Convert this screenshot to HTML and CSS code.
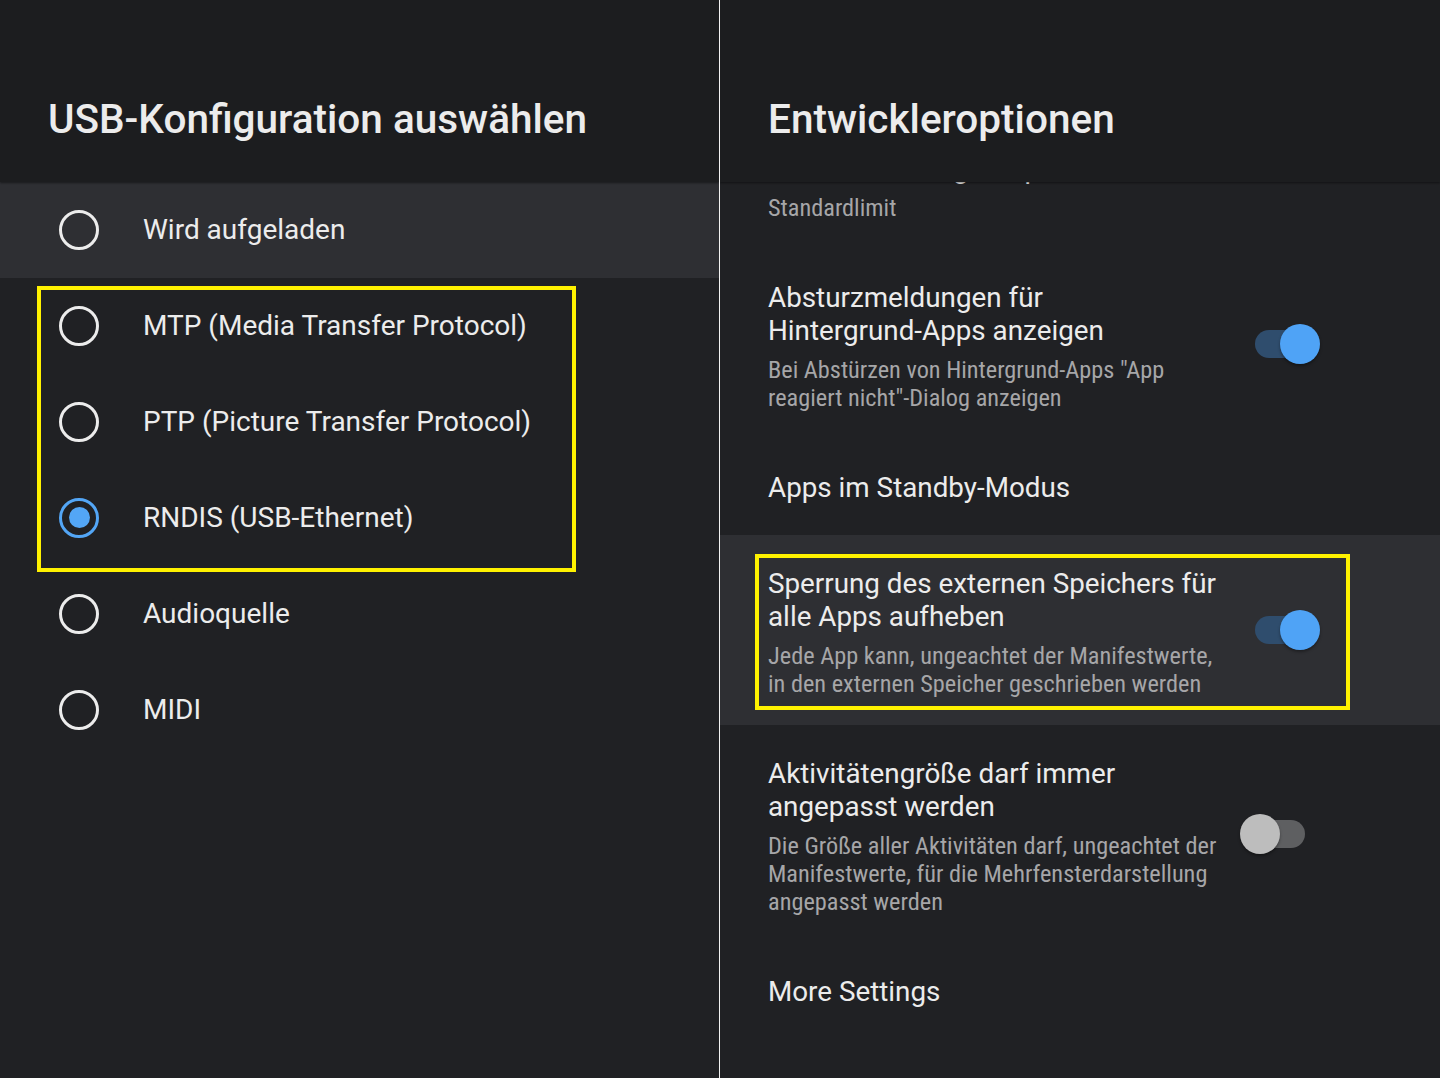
FILE: index.html
```html
<!DOCTYPE html>
<html lang="de">
<head>
<meta charset="utf-8">
<title>USB-Konfiguration / Entwickleroptionen</title>
<link rel="stylesheet" href="styles.css">
</head>
<body>
<div class="screen">
  <section class="panel panel-left">
    <header class="panel-header"><h1 class="panel-title">USB-Konfiguration auswählen</h1></header>
    <div class="radio-list">
      <div class="radio-row is-focused"><span class="radio"></span><span class="radio-label">Wird aufgeladen</span></div>
      <div class="radio-row"><span class="radio"></span><span class="radio-label">MTP (Media Transfer Protocol)</span></div>
      <div class="radio-row"><span class="radio"></span><span class="radio-label">PTP (Picture Transfer Protocol)</span></div>
      <div class="radio-row"><span class="radio is-checked"></span><span class="radio-label">RNDIS (USB-Ethernet)</span></div>
      <div class="radio-row"><span class="radio"></span><span class="radio-label">Audioquelle</span></div>
      <div class="radio-row"><span class="radio"></span><span class="radio-label">MIDI</span></div>
    </div>
    <div class="mark mark-left"></div>
  </section>
  <div class="divider"></div>
  <section class="panel panel-right">
    <header class="panel-header"><h1 class="panel-title">Entwickleroptionen</h1></header>
    <div class="pref-list">
      <div class="pref pref-cut">
        <div class="pref-text">
          <div class="pref-title">Limit für Hintergrundprozesse</div>
          <div class="pref-summary">Standardlimit</div>
        </div>
      </div>
      <div class="pref">
        <div class="pref-text">
          <div class="pref-title">Absturzmeldungen für <span class="nowrap">Hintergrund-Apps</span> anzeigen</div>
          <div class="pref-summary">Bei Abstürzen von Hintergrund-Apps "App reagiert nicht"-Dialog anzeigen</div>
        </div>
        <span class="switch is-on"><span class="switch-track"></span><span class="switch-thumb"></span></span>
      </div>
      <div class="pref">
        <div class="pref-text">
          <div class="pref-title">Apps im Standby-Modus</div>
        </div>
      </div>
      <div class="pref is-focused">
        <div class="pref-text">
          <div class="pref-title">Sperrung des externen Speichers für alle Apps aufheben</div>
          <div class="pref-summary">Jede App kann, ungeachtet der Manifestwerte, in den externen Speicher geschrieben werden</div>
        </div>
        <span class="switch is-on"><span class="switch-track"></span><span class="switch-thumb"></span></span>
      </div>
      <div class="pref">
        <div class="pref-text">
          <div class="pref-title">Aktivitätengröße darf immer angepasst werden</div>
          <div class="pref-summary">Die Größe aller Aktivitäten darf, ungeachtet der Manifestwerte, für die Mehrfensterdarstellung angepasst werden</div>
        </div>
        <span class="switch"><span class="switch-track"></span><span class="switch-thumb"></span></span>
      </div>
      <div class="pref">
        <div class="pref-text">
          <div class="pref-title">More Settings</div>
        </div>
      </div>
    </div>
    <div class="mark mark-right"></div>
  </section>
</div>
</body>
</html>
```
FILE: styles.css
```css
* { box-sizing: border-box; }
html, body { margin: 0; padding: 0; }
body {
  background: #202124;
  font-family: Roboto, "Noto Sans", "Liberation Sans", sans-serif;
  color: #ececec;
  width: 1440px;
  height: 1078px;
  overflow: hidden;
}
.screen {
  display: grid;
  grid-template-columns: 719px 1px 720px;
  height: 1078px;
}
.divider { background: #f2f2f2; }
.nowrap { white-space: nowrap; }
.panel {
  position: relative;
  display: flex;
  flex-direction: column;
  background: #202124;
  overflow: hidden;
}
.panel-header {
  position: relative;
  z-index: 2;
  height: 182px;
  flex: 0 0 182px;
  background: #1c1d1f;
  padding: 95px 0 0 48px;
  box-shadow: 0 1px 2px rgba(0,0,0,0.45);
}
.panel-title {
  margin: 0;
  font-size: 40.5px;
  line-height: 48px;
  font-weight: 500;
  color: #ececec;
  letter-spacing: 0;
}

/* left list */
.radio-list { display: flex; flex-direction: column; }
.radio-row {
  display: flex;
  align-items: center;
  height: 96px;
  padding-left: 59px;
}
.radio-row.is-focused { background: #2e2f33; }
.radio {
  width: 40px;
  height: 40px;
  flex: 0 0 40px;
  border-radius: 50%;
  border: 3.5px solid #ececec;
  margin-right: 44px;
  margin-bottom: 1px;
  display: grid;
  place-items: center;
}
.radio.is-checked { border-color: #53a6f6; }
.radio.is-checked::after {
  content: "";
  width: 21px;
  height: 21px;
  border-radius: 50%;
  background: #53a6f6;
}
.radio-label {
  font-size: 28px;
  line-height: 33px;
  margin-bottom: 2px;
  color: #ececec;
}

/* right list */
.pref-list {
  display: flex;
  flex-direction: column;
  overflow: hidden;
  flex: 1;
}
.pref {
  display: flex;
  align-items: center;
  min-height: 96px;
  padding: 0 120px 0 48px;
}
.pref.is-focused { background: #2e2f33; }
.pref-cut { margin-top: -62px; }
.pref-text {
  flex: 1;
  align-self: flex-start;
  padding: 31.5px 0 27px;
}
.pref-title {
  font-size: 27.8px;
  line-height: 33px;
  color: #ececec;
}
.pref-summary {
  margin-top: 9.5px;
  font-family: "Roboto Condensed", "Liberation Sans Narrow", "DejaVu Sans Condensed", Roboto, sans-serif;
  font-stretch: condensed;
  font-size: 24.3px;
  line-height: 28px;
  color: #a6a6a8;
}
.switch {
  flex: 0 0 80px;
  width: 80px;
  height: 40px;
  margin-left: 12px;
  display: grid;
  align-items: center;
}
.switch-track, .switch-thumb { grid-area: 1 / 1; }
.switch-track {
  justify-self: center;
  width: 50px;
  height: 28px;
  border-radius: 14px;
  background: #5e5f61;
}
.switch-thumb {
  justify-self: start;
  width: 40px;
  height: 40px;
  border-radius: 50%;
  background: #bdbdbd;
  box-shadow: 0 2px 3px rgba(0,0,0,0.35);
}
.switch.is-on .switch-track { background: #2f4d6d; }
.switch.is-on .switch-thumb { justify-self: end; background: #4fa3f6; }

/* annotation frames */
.mark {
  position: absolute;
  border: 4px solid #fff200;
  pointer-events: none;
  z-index: 3;
}
.mark-left { left: 37px; top: 286px; width: 539px; height: 286px; }
.mark-right { left: 35px; top: 554px; width: 595px; height: 156px; }
```
